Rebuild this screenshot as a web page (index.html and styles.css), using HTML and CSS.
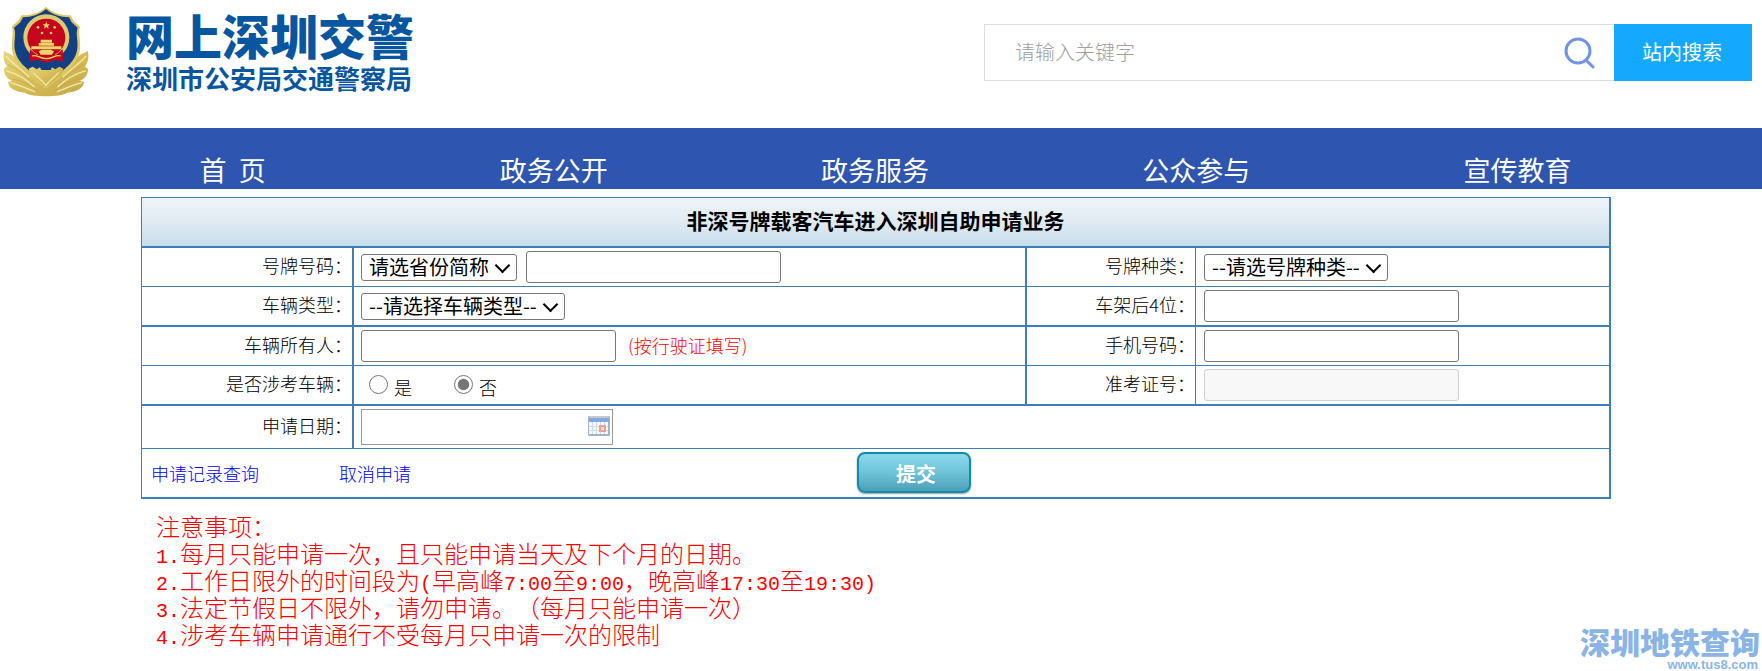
FILE: index.html
```html
<!DOCTYPE html>
<html lang="zh-CN">
<head>
  <meta charset="UTF-8" />
  <title>网上深圳交警</title>
  <link rel="stylesheet" href="styles.css">
</head>
<body>
  <header class="top">
    <a class="logo" href="#">
      <svg class="emblem" viewBox="0 0 276 300" aria-hidden="true">
        <defs>
          <linearGradient id="gold" x1="0" y1="0" x2="1" y2="1">
            <stop offset="0" stop-color="#e9d77c" />
            <stop offset="0.5" stop-color="#d6bd57" />
            <stop offset="1" stop-color="#c3a645" />
          </linearGradient>
        </defs>
        <!-- wreath -->
        <path fill="url(#gold)" d="M13 152 C20 160 30 158 42 170 L92 215 L138 228 L184 215 L234 170 C246 158 256 160 263 152 C268 172 264 188 254 200 C260 202 264 204 264 210 C262 228 252 238 240 242 L252 246 C250 268 224 276 202 278 C180 292 96 292 74 278 C52 276 26 268 24 246 L36 242 C24 238 14 228 12 210 C12 204 16 202 22 200 C12 188 8 172 13 152Z" />
        <path fill="none" stroke="#f3e9a8" stroke-width="4" d="M18 168 C34 188 62 206 88 232 M18 212 C46 220 78 236 104 262 M30 248 C56 254 80 266 106 276 M258 168 C242 188 214 206 188 232 M258 212 C230 220 198 236 172 262 M246 248 C220 254 196 266 170 276" />
        <path fill="none" stroke="#bba24a" stroke-width="2" d="M24 194 C48 204 76 226 98 250 M38 238 C62 240 88 256 112 272 M252 194 C228 204 200 226 178 250 M238 238 C214 240 188 256 164 272" />
        <!-- shield -->
        <path fill="#ddc665" d="M138 20 C156 38 182 46 212 46 L221 62 L240 80 C232 100 246 128 238 158 C230 198 184 230 138 266 C92 230 46 198 38 158 C30 128 44 100 35 80 L55 62 L64 46 C94 46 120 38 138 20Z" />
        <path fill="#133f83" d="M138 27 C158 44 180 51 207 52 L215 67 L233 83 C225 104 238 128 230 156 C222 184 206 196 188 212 L88 212 C70 196 54 184 46 156 C38 128 51 104 42 83 L61 67 L69 52 C96 51 118 44 138 27Z" />
        <path fill="url(#gold)" d="M86 206 L98 200 L110 208 L120 202 L124 210 L152 210 L156 202 L166 208 L178 200 L190 206 L184 226 L138 262 L92 226Z" />
        <path fill="none" stroke="#f3e9a8" stroke-width="4" d="M100 218 C114 234 128 242 138 256 C148 242 162 234 176 218" />
        <!-- national emblem -->
        <circle cx="139" cy="112" r="69" fill="#ddca73" />
        <circle cx="139" cy="113" r="57" fill="#c5061c" />
        <path fill="#c5061c" d="M90 148 L110 164 L168 164 L188 148 L190 184 L162 180 L139 188 L116 180 L88 184Z" />
        <g fill="#ecd56a">
          <path d="M139 65 l3 8 h8 l-6 5 2 8 -7 -5 -7 5 2 -8 -6 -5 h8z" />
          <circle cx="114" cy="82" r="4" />
          <circle cx="164" cy="82" r="4" />
          <circle cx="126" cy="99" r="4" />
          <circle cx="153" cy="99" r="4" />
          <path d="M122 119 h34 v9 h-34z M116 129 h46 v8 h-46z M94 139 h90 v9 h-90z" />
          <path d="M116 154 L126 149 H152 L162 154 L156 164 H122Z" />
        </g>
        <path fill="none" stroke="#ecd56a" stroke-width="4" d="M96 168 C110 162 120 176 139 176 C158 176 168 162 182 168" />
      </svg>
      <span class="logo-text">
        <span class="logo-name">网上深圳交警</span>
        <span class="logo-sub">深圳市公安局交通警察局</span>
      </span>
    </a>

    <form class="search">
      <input class="search-input" type="text" placeholder="请输入关键字" aria-label="请输入关键字">
      <svg class="search-icon" viewBox="0 0 32 32" aria-hidden="true">
        <circle cx="14" cy="14" r="12" />
        <path d="M22 23 L29 30" />
      </svg>
      <button class="search-btn" type="button">站内搜索</button>
    </form>
  </header>

  <nav class="main-menu">
    <a href="#">首&nbsp; 页</a>
    <a href="#">政务公开</a>
    <a href="#">政务服务</a>
    <a href="#">公众参与</a>
    <a href="#">宣传教育</a>
  </nav>

  <form class="apply">
    <table class="apply-table">
      <colgroup>
        <col class="col-label">
        <col>
        <col class="col-label2">
        <col class="col-field2">
      </colgroup>
      <tr class="title-row thick">
        <th colspan="4">非深号牌载客汽车进入深圳自助申请业务</th>
      </tr>
      <tr>
        <td class="label wide"><label for="plate">号牌号码：</label></td>
        <td class="wide">
          <div class="field">
            <div class="select">
              <select id="province" aria-label="省份简称">
                <option>请选省份简称</option>
              </select>
            </div>
            <input class="text" type="text" id="plate">
          </div>
        </td>
        <td class="label"><label for="plateType">号牌种类：</label></td>
        <td class="wide">
          <div class="field">
            <div class="select">
              <select id="plateType">
                <option>--请选号牌种类--</option>
              </select>
            </div>
          </div>
        </td>
      </tr>
      <tr class="thick">
        <td class="label wide"><label for="carType">车辆类型：</label></td>
        <td class="wide">
          <div class="field">
            <div class="select">
              <select id="carType">
                <option>--请选择车辆类型--</option>
              </select>
            </div>
          </div>
        </td>
        <td class="label"><label for="vin">车架后4位：</label></td>
        <td class="wide"><div class="field"><input class="text" type="text" id="vin"></div></td>
      </tr>
      <tr>
        <td class="label wide"><label for="owner">车辆所有人：</label></td>
        <td class="wide">
          <div class="field">
            <input class="text" type="text" id="owner">
            <span class="hint">(按行驶证填写)</span>
          </div>
        </td>
        <td class="label"><label for="phone">手机号码：</label></td>
        <td class="wide"><div class="field"><input class="text" type="text" id="phone"></div></td>
      </tr>
      <tr class="thick">
        <td class="label wide">是否涉考车辆：</td>
        <td class="wide">
          <div class="field radios">
            <label><input type="radio" name="exam" value="1"><span>是</span></label>
            <label><input type="radio" name="exam" value="0" checked><span>否</span></label>
          </div>
        </td>
        <td class="label"><label for="ticket">准考证号：</label></td>
        <td class="wide"><div class="field"><input class="text" type="text" id="ticket" disabled></div></td>
      </tr>
      <tr class="date-row">
        <td class="label wide"><label for="date">申请日期：</label></td>
        <td class="wide" colspan="3">
          <div class="field">
            <div class="date-box">
              <input type="text" id="date">
              <svg class="calendar" viewBox="0 0 22 20" aria-hidden="true">
                <rect x="0" y="0" width="22" height="20" rx="1" fill="#a3b5cc" />
                <rect x="1" y="0" width="20" height="3" fill="#c8c8c8" />
                <rect x="1" y="2" width="20" height="4" fill="#86a5e3" />
                <rect x="1" y="6" width="19" height="12" fill="#f5f8fd" />
                <path d="M1 10.5H20M1 14.5H20M4.5 6V18M8.5 6V18M12.5 6V18M16.5 6V18" stroke="#cfdaee" />
                <rect x="12" y="10" width="5" height="5" fill="#fbe0d8" stroke="#f0a28e" stroke-width="2" />
              </svg>
            </div>
          </div>
        </td>
      </tr>
      <tr class="submit-row thick">
        <td class="wide" colspan="4">
          <div class="actions">
            <div class="links">
              <a href="#">申请记录查询</a>
              <a href="#">取消申请</a>
            </div>
            <button class="submit" type="button">提交</button>
          </div>
        </td>
      </tr>
    </table>
  </form>

  <div class="notes">
    <p>注意事项：</p>
    <p><span class="num">1.</span>每月只能申请一次，且只能申请当天及下个月的日期。</p>
    <p><span class="num">2.</span>工作日限外的时间段为<span class="num">(</span>早高峰<span class="num">7:00</span>至<span class="num">9:00</span>，晚高峰<span class="num">17:30</span>至<span class="num">19:30)</span></p>
    <p><span class="num">3.</span>法定节假日不限外，请勿申请。（每月只能申请一次）</p>
    <p><span class="num">4.</span>涉考车辆申请通行不受每月只申请一次的限制</p>
  </div>

  <div class="watermark">
    <span class="watermark-name">深圳地铁查询</span>
    <span class="watermark-url">www.tus8.com</span>
  </div>
</body>
</html>
```
FILE: styles.css
```css
* {
  box-sizing: border-box;
}
body {
  margin: 0;
  background: #fff;
  color: #000;
  font-family: "Noto Sans CJK SC", sans-serif;
  font-size: 18px;
  text-spacing-trim: space-all;
}
a {
  text-decoration: none;
}

/* Logo + recherche */
.top {
  display: flex;
  justify-content: space-between;
  align-items: flex-start;
  height: 128px;
  padding-right: 10px;
}
.logo {
  display: flex;
  gap: 34px;
  color: #08569f;
}
.emblem {
  width: 92px;
  height: 100px;
}
.logo-text {
  display: flex;
  flex-direction: column;
  padding-top: 5px;
  white-space: nowrap;
}
.logo-name {
  font-size: 48px;
  font-weight: 900;
  line-height: 58px;
}
.logo-sub {
  font-size: 26px;
  font-weight: 700;
  line-height: 30px;
}
.search {
  display: flex;
  position: relative;
  width: 768px;
  margin-top: 24px;
}
.search-input {
  flex: 1;
  min-width: 0;
  height: 57px;
  padding: 0 60px 2px 30px;
  border: 1px solid #ddd;
  border-right: none;
  font-family: inherit;
  font-size: 20px;
  font-weight: 300;
}
.search-input::placeholder {
  color: #a0a0a0;
}
.search-icon {
  position: absolute;
  top: 13px;
  right: 156px;
  width: 32px;
  height: 32px;
  fill: none;
  stroke: #6f93e6;
  stroke-width: 3;
  stroke-linecap: round;
}
.search-btn {
  width: 138px;
  height: 57px;
  padding: 0 2px 2px 0;
  border: none;
  background: #14a9ff;
  color: #fff;
  font-family: inherit;
  font-size: 20px;
  cursor: pointer;
}

/* Menu */
.main-menu {
  display: grid;
  grid-template-columns: repeat(5, 1fr);
  height: 61px;
  padding: 22px 84px 0 72px;
  background: #2e56b1;
  text-align: center;
}
.main-menu a {
  color: #fff;
  font-size: 27px;
  line-height: 39px;
}

/* Formulaire */
.apply {
  margin: 8px 151px 0 141px;
}
.apply-table {
  width: 100%;
  table-layout: fixed;
  border: 1px solid #3c7fbb;
  border-width: 1px 0 0 1px;
  border-spacing: 0;
}
.col-label {
  width: 212px;
}
.col-label2 {
  width: 169px;
}
.col-field2 {
  width: 415px;
}
.apply-table td,
.apply-table th {
  height: 39px;
  padding: 0;
  border: 0 solid #3c7fbb;
  border-width: 0 1px 1px 0;
}
.apply-table .wide {
  border-right-width: 2px;
}
.apply-table .thick td,
.apply-table .thick th {
  height: 40px;
  border-bottom-width: 2px;
}
.apply-table .title-row th {
  height: 50px;
  padding-bottom: 4px;
  border-right-width: 2px;
  background: linear-gradient(#eef5f7, #e3edf4 40%, #c8ddec);
  font-size: 21px;
  line-height: 30px;
}
.apply-table .date-row td {
  height: 43px;
}
.apply-table .submit-row td {
  height: 50px;
}
.apply-table .label {
  padding-bottom: 3px;
  text-align: right;
  font-weight: 300;
  line-height: 27px;
  white-space: nowrap;
}
.field {
  display: flex;
  align-items: center;
  gap: 9px;
  padding-left: 7px;
  line-height: 27px;
}
.label:not(.wide) + td .field {
  padding-left: 8px;
}
.select {
  position: relative;
  height: 27px;
}
.select::after {
  content: "";
  position: absolute;
  top: 6px;
  right: 9px;
  width: 9px;
  height: 9px;
  border: solid #000;
  border-width: 0 2px 2px 0;
  transform: rotate(45deg);
  pointer-events: none;
}
select {
  appearance: none;
  display: block;
  height: 27px;
  padding: 0 27px 2px 7px;
  border: 1px solid #767676;
  border-radius: 3px;
  background: #fff;
  color: #000;
  font-family: "Noto Sans CJK SC", sans-serif;
  font-size: 20px;
  line-height: 23px;
}
.text {
  width: 255px;
  height: 32px;
  border: 1px solid #767676;
  border-radius: 3px;
  background: #fff;
  font-size: 18px;
}
.text:disabled {
  border-color: #d0d0d0;
  background: #f8f8f8;
}
.hint {
  padding: 0 0 2px 3px;
  color: #f00;
  font-weight: 300;
}
.radios {
  gap: 42px;
  padding-left: 15px;
  font-weight: 300;
}
.radios label {
  display: flex;
  align-items: center;
  gap: 6px;
}
.radios input {
  width: 19px;
  height: 19px;
  margin: 0 0 1px;
  accent-color: #767676;
}
.radios span {
  padding-top: 4px;
}
.date-box {
  display: flex;
  align-items: center;
  width: 252px;
  height: 36px;
  padding: 0 2px 2px 0;
  border: 1px solid #999;
}
.date-box input {
  flex: 1;
  min-width: 0;
  height: 32px;
  border: none;
  outline: none;
  font-size: 18px;
}
.calendar {
  width: 22px;
  height: 20px;
}
.actions {
  display: flex;
  justify-content: space-between;
  align-items: center;
  padding: 0 638px 2px 9px;
}
.links {
  display: flex;
  gap: 80px;
  padding-top: 2px;
}
.links a {
  color: #00f;
  font-weight: 300;
}
.submit {
  width: 114px;
  height: 41px;
  padding: 2px 0 0 4px;
  border: 2px solid #128bab;
  border-radius: 8px;
  background: linear-gradient(#8ad9ec, #6fc3d8 50%, #4ba0b9);
  box-shadow: 0 1px 2px #999;
  color: #fff;
  font-family: inherit;
  font-size: 20px;
  font-weight: 700;
  cursor: pointer;
}

/* Remarques */
.notes {
  margin: 13px 151px 0 156px;
  color: #f00;
  font-size: 24px;
  font-weight: 300;
  line-height: 27px;
}
.notes p {
  margin: 0;
}
.num {
  font-family: "Liberation Mono", monospace;
  font-size: 20px;
  line-height: 16px;
}

.watermark {
  position: absolute;
  right: 2px;
  bottom: 0;
  display: flex;
  flex-direction: column;
  align-items: flex-end;
  color: #8ab4e6;
  font-weight: 900;
}
.watermark-name {
  font-size: 30px;
  line-height: 36px;
}
.watermark-url {
  padding-right: 2px;
  font-family: "Liberation Sans", sans-serif;
  font-size: 13px;
  line-height: 12px;
}
```
